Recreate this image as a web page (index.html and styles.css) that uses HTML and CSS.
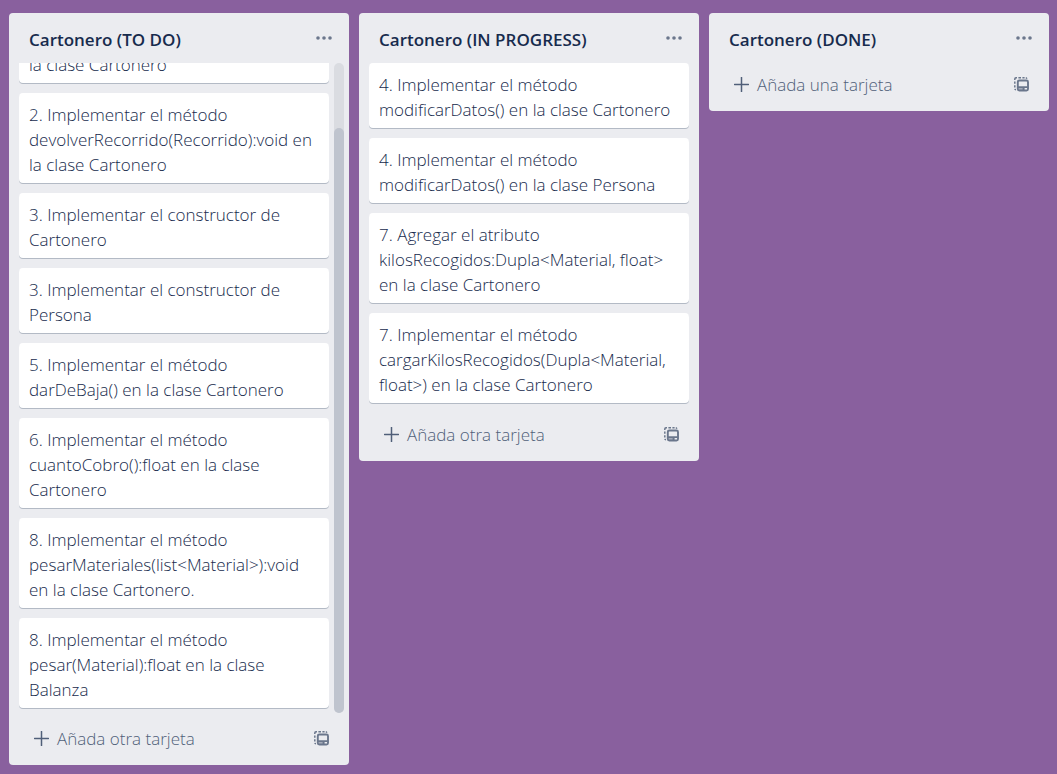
FILE: index.html
```html
<!DOCTYPE html>
<html lang="es">
<head>
<meta charset="utf-8">
<meta name="viewport" content="width=device-width, initial-scale=1">
<title>Cartonero</title>
<link rel="stylesheet" href="styles.css">
</head>
<body>
<svg class="symbols" aria-hidden="true">
  <symbol id="dots" viewBox="0 0 16 4"><circle cx="2" cy="2" r="1.8"/><circle cx="8" cy="2" r="1.8"/><circle cx="14" cy="2" r="1.8"/></symbol>
  <symbol id="plus" viewBox="0 0 15 15"><path d="M7.5 0.5v14M0.5 7.5h14" fill="none" stroke="currentColor" stroke-width="1.5" stroke-linecap="round"/></symbol>
  <symbol id="template" viewBox="0 0 15 15">
    <path d="M0.8 3V2Q0.8 0.8 2 0.8H3M4.4 0.8H7M8.4 0.8H10.6M11.8 0.8Q12.6 0.9 12.8 1.7M0.8 4.4V6.8M0.8 8.2V10.4M0.9 11.8Q1 12.6 2 12.7" fill="none" stroke="currentColor" stroke-width="1.5"/>
    <rect x="3.8" y="3.5" width="10.2" height="10" rx="1.5" fill="none" stroke="currentColor" stroke-width="1.9"/>
    <path d="M4 9.2h10v1.8H4zM8.6 10.4h2v3H8.6z"/>
    <path d="M4.4 10.6h5v2.6H4.4z" opacity=".55"/>
  </symbol>
</svg>
<main class="board">
  <section class="list">
    <header class="list-header"><h2 class="list-title">Cartonero (TO DO)</h2><button class="icon-button" aria-label="Menú de la lista"><svg class="dots"><use href="#dots"/></svg></button></header>
    <div class="scroll-area">
      <div class="cards cards-end">
        <a class="card" href="#">la clase Cartonero</a>
        <a class="card" href="#">2. Implementar el método<br>devolverRecorrido(Recorrido):void en<br>la clase Cartonero</a>
        <a class="card" href="#">3. Implementar el constructor de<br>Cartonero</a>
        <a class="card" href="#">3. Implementar el constructor de<br>Persona</a>
        <a class="card" href="#">5. Implementar el método<br>darDeBaja() en la clase Cartonero</a>
        <a class="card" href="#">6. Implementar el método<br>cuantoCobro():float en la clase<br>Cartonero</a>
        <a class="card" href="#">8. Implementar el método<br>pesarMateriales(list&lt;Material&gt;):void<br>en la clase Cartonero.</a>
        <a class="card" href="#">8. Implementar el método<br>pesar(Material):float en la clase<br>Balanza</a>
      </div>
      <div class="track"><div class="thumb"></div></div>
    </div>
    <footer class="list-footer"><button class="add-card"><svg class="plus"><use href="#plus"/></svg>Añada otra tarjeta</button><button class="icon-button" aria-label="Crear desde plantilla"><svg class="template"><use href="#template"/></svg></button></footer>
  </section>
  <section class="list">
    <header class="list-header"><h2 class="list-title">Cartonero (IN PROGRESS)</h2><button class="icon-button" aria-label="Menú de la lista"><svg class="dots"><use href="#dots"/></svg></button></header>
    <div class="cards cards-open">
      <a class="card" href="#">4. Implementar el método<br>modificarDatos() en la clase Cartonero</a>
      <a class="card" href="#">4. Implementar el método<br>modificarDatos() en la clase Persona</a>
      <a class="card" href="#">7. Agregar el atributo<br>kilosRecogidos:Dupla&lt;Material, float&gt;<br>en la clase Cartonero</a>
      <a class="card" href="#">7. Implementar el método<br>cargarKilosRecogidos(Dupla&lt;Material,<br>float&gt;) en la clase Cartonero</a>
    </div>
    <footer class="list-footer"><button class="add-card"><svg class="plus"><use href="#plus"/></svg>Añada otra tarjeta</button><button class="icon-button" aria-label="Crear desde plantilla"><svg class="template"><use href="#template"/></svg></button></footer>
  </section>
  <section class="list">
    <header class="list-header"><h2 class="list-title">Cartonero (DONE)</h2><button class="icon-button" aria-label="Menú de la lista"><svg class="dots"><use href="#dots"/></svg></button></header>
    <footer class="list-footer"><button class="add-card"><svg class="plus"><use href="#plus"/></svg>Añada una tarjeta</button><button class="icon-button" aria-label="Crear desde plantilla"><svg class="template"><use href="#template"/></svg></button></footer>
  </section>
</main>
</body>
</html>
```
FILE: styles.css
```css
* { box-sizing: border-box; }
body {
  margin: 0;
  background: #89609e;
  color: #172b4d;
  font: 300 17px/25px "Open Sans", "Noto Sans", sans-serif;
}
.symbols { display: none; }
.board {
  display: grid;
  grid-template-columns: repeat(3, minmax(0, 1fr));
  align-items: start;
  gap: 10px;
  height: 100vh;
  padding: 13px 8px 9px 9px;
}
.list {
  display: flex;
  flex-direction: column;
  min-height: 0;
  max-height: calc(100vh - 22px);
  background: #ebecf0;
  border-radius: 4px;
}
.list-header, .list-footer {
  display: flex;
  flex: none;
  align-items: center;
  justify-content: space-between;
}
.list-header { height: 50px; padding: 0 17px 0 20px; }
.list-title { margin: 0; padding-top: 3px; font-size: 17px; font-weight: 600; line-height: 25px; white-space: nowrap; }
.list-footer { height: 48px; padding: 0 20px 6px 25px; }
button {
  display: flex;
  align-items: center;
  padding: 0;
  border: 0;
  background: none;
  color: #6b778c;
  font: inherit;
}
svg { display: block; fill: currentColor; }
.dots { width: 16px; height: 4px; }
.plus { width: 15px; height: 15px; }
.template { width: 15px; height: 15px; }
.add-card { gap: 8px; color: #505f79; white-space: nowrap; }
.scroll-area {
  display: flex;
  flex: 1 1 650px;
  gap: 5px;
  min-height: 0;
  margin-bottom: 4px;
  padding: 0 5px 0 10px;
}
.cards { display: flex; flex-direction: column; gap: 10px; }
.cards-end { flex: 1; justify-content: flex-end; min-width: 0; overflow: hidden; padding-bottom: 5px; }
.cards-open { padding: 0 10px 10px; }
.card {
  flex: none;
  padding: 9px 10px 6px;
  background: #fff;
  border-radius: 4px;
  box-shadow: 0 1px 0 #b3bac5;
  color: inherit;
  text-decoration: none;
  white-space: nowrap;
}
.track { display: flex; flex: none; align-items: flex-end; width: 10px; background: #dadce1; border-radius: 5px; }
.thumb { width: 10px; height: 90%; background: #bfc4ce; border-radius: 5px; }
```
